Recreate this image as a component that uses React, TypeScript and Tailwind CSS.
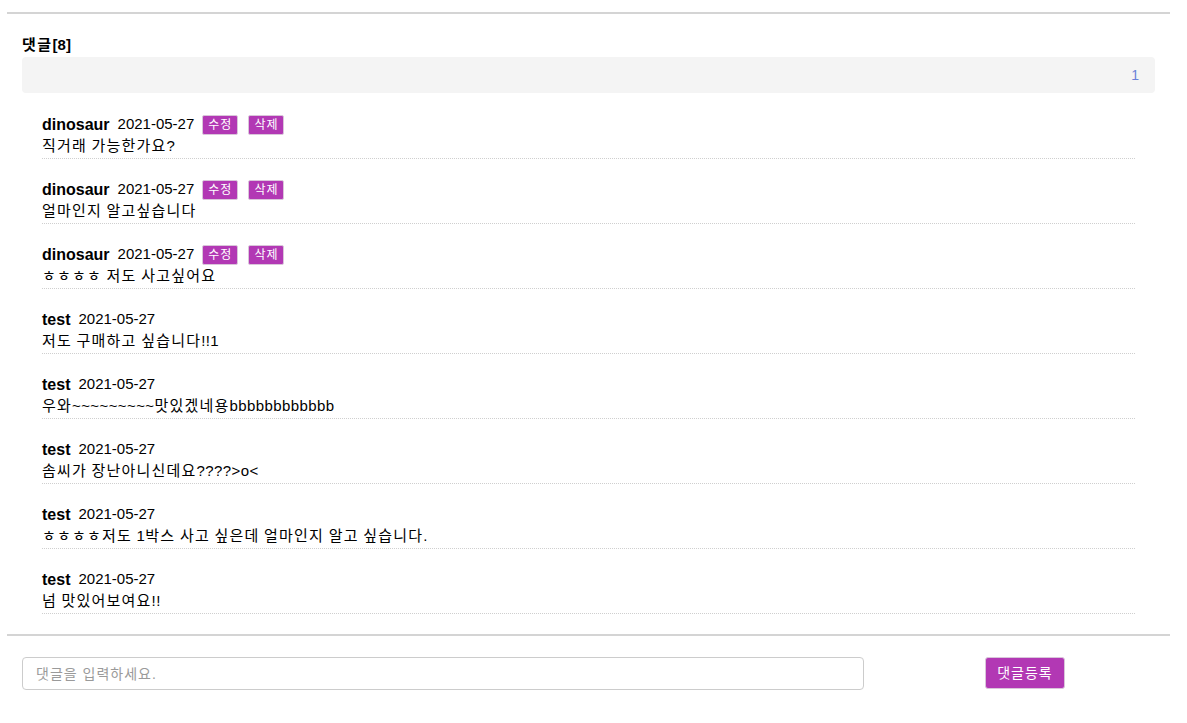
const comments = [
  { id: 1, user: "dinosaur", date: "2021-05-27", text: "직거래 가능한가요?", mine: true },
  { id: 2, user: "dinosaur", date: "2021-05-27", text: "얼마인지 알고싶습니다", mine: true },
  { id: 3, user: "dinosaur", date: "2021-05-27", text: "ㅎㅎㅎㅎ 저도 사고싶어요", mine: true },
  { id: 4, user: "test", date: "2021-05-27", text: "저도 구매하고 싶습니다!!1", mine: false },
  { id: 5, user: "test", date: "2021-05-27", text: "우와~~~~~~~~~맛있겠네용bbbbbbbbbbbb", mine: false },
  { id: 6, user: "test", date: "2021-05-27", text: "솜씨가 장난아니신데요????>o<", mine: false },
  { id: 7, user: "test", date: "2021-05-27", text: "ㅎㅎㅎㅎ저도 1박스 사고 싶은데 얼마인지 알고 싶습니다.", mine: false },
  { id: 8, user: "test", date: "2021-05-27", text: "넘 맛있어보여요!!", mine: false },
];

const font = { fontFamily: '"Liberation Sans", Arial, "Noto Sans CJK KR", sans-serif' };

// hangul glyphs in the fallback font are narrower than the original, so widen those runs a bit
function Ko({ text }: { text: string }) {
  const parts = text.match(/[\u3131-\u318e\uac00-\ud7a3]+|[^\u3131-\u318e\uac00-\ud7a3]+/g) || [];
  return (
    <>
      {parts.map((p, i) =>
        /[\u3131-\u318e\uac00-\ud7a3]/.test(p) ? (
          <span key={i} className="tracking-[1.2px]">{p}</span>
        ) : (
          <span key={i} className="tracking-[0.4px]">{p}</span>
        )
      )}
    </>
  );
}

function SmallBtn({ label }: { label: string }) {
  return (
    <button className="h-5 px-[5px] bg-[#b238b4] text-white text-[12px] leading-none tracking-[1px] rounded-[2px] border border-[#d9c6da]">
      {label}
    </button>
  );
}

function CommentItem({ c }: { c: (typeof comments)[number] }) {
  return (
    <li className="mt-5 first:mt-0 pb-[2px] border-b border-dotted border-[#cfcfcf]">
      <div className="flex items-center h-5 pt-[1px]">
        <span className="font-bold text-[16px] text-black">{c.user}</span>
        <span className="ml-2 text-[15px] text-black">{c.date}</span>
        {c.mine && (
          <div className="ml-2 flex gap-[10px]">
            <SmallBtn label="수정" />
            <SmallBtn label="삭제" />
          </div>
        )}
      </div>
      <p className="h-5 mt-[2px] leading-5 text-[15px] text-black whitespace-nowrap">
        <Ko text={c.text} />
      </p>
    </li>
  );
}

export default function App() {
  return (
    <div className="w-[1187px] h-[723px] bg-white pt-3" style={font}>
      <div className="mx-[7px] w-[1163px] border-t-2 border-[#d4d4d4] px-[15px] pt-[21px]">
        <h3 className="h-5 leading-5 text-[15px] font-bold text-black">
          <span className="tracking-[1.5px]">댓글</span>[8]
        </h3>
        <div className="mt-[2px] h-9 bg-[#f4f4f4] rounded flex items-center justify-end pr-4">
          <span className="text-[14px] text-[#6a80d8]">1</span>
        </div>
        <ul className="mx-5 mt-[21px]">
          {comments.map(c => (
            <CommentItem key={c.id} c={c} />
          ))}
        </ul>
      </div>
      <div className="mx-[7px] mt-5 w-[1163px] border-t-2 border-[#d4d4d4] px-[15px] pt-[21px] flex items-start">
        <input
          type="text"
          placeholder="댓글을 입력하세요."
          className="w-[842px] h-[33px] rounded border border-[#cccccc] px-[13px] text-[14px] tracking-[1px] placeholder:text-[#9a9a9a] outline-none"
        />
        <button className="ml-[121px] w-20 h-8 bg-[#b238b4] text-white text-[14px] tracking-[1px] rounded-[3px] border border-[#d9c6da]">
          댓글등록
        </button>
      </div>
    </div>
  );
}
